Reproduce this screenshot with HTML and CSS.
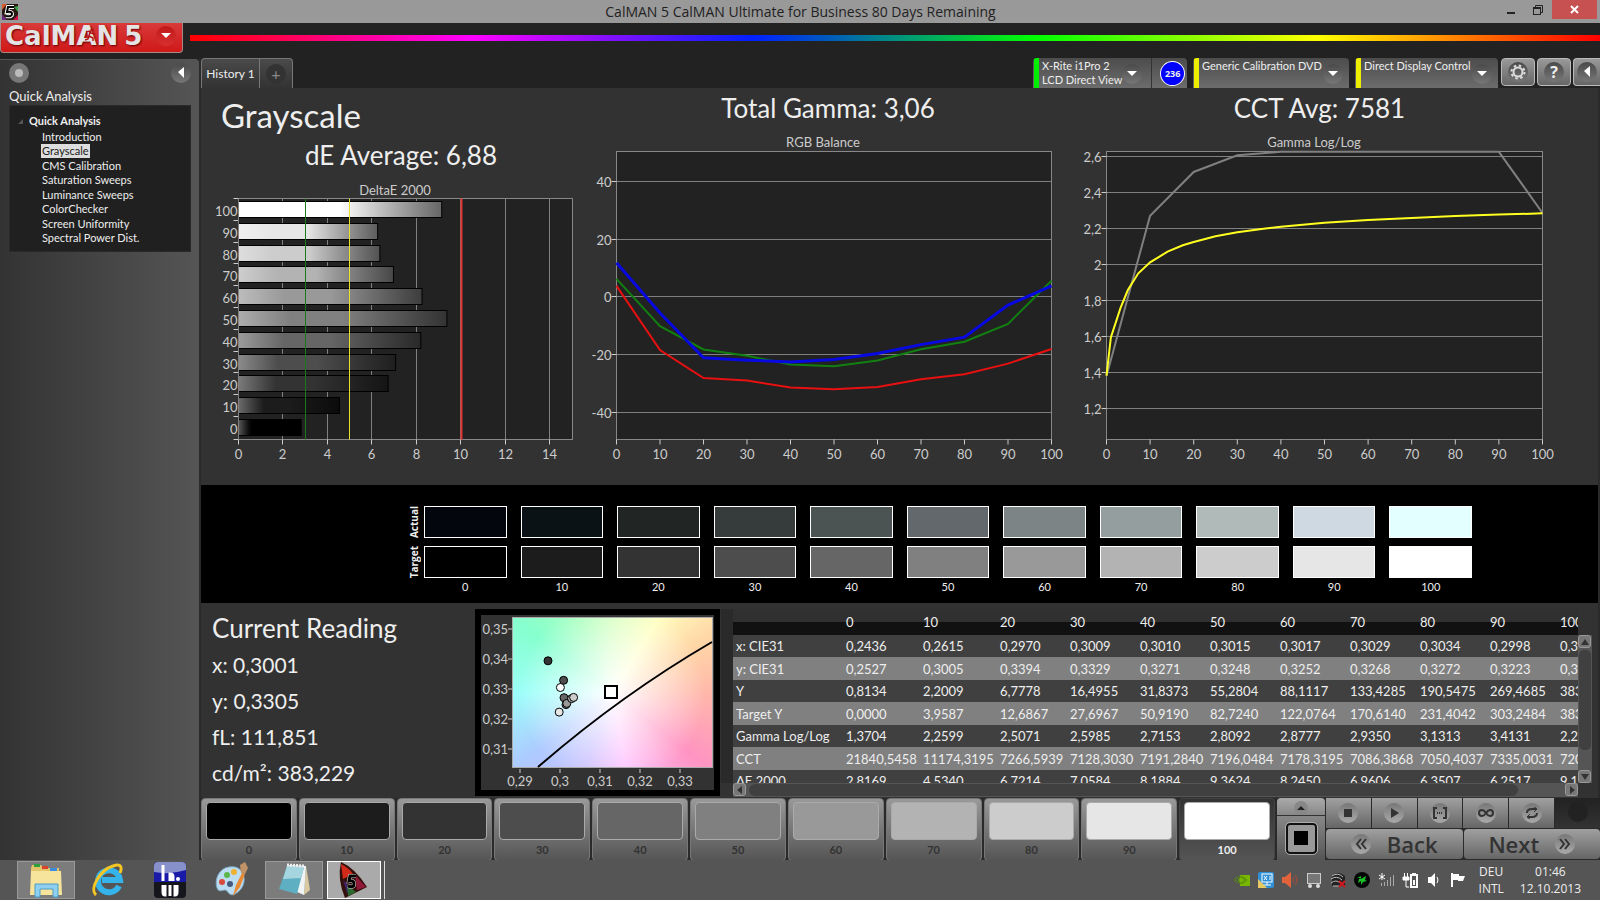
FILE: index.html
```html
<!DOCTYPE html>
<html lang="en">
<head>
  <meta charset="UTF-8">
  <meta name="viewport" content="width=device-width, initial-scale=1.0">
  <title>CalMAN 5</title>
  <link rel="stylesheet" href="styles.css">
</head>
<body>
  <div class="titlebar">
    <svg class="app-icon" viewBox="0 0 16 16">
      <rect width="16" height="16" fill="#2a1a14"/>
      <path d="M0 0h5L0 6z" fill="#d8582a"/><path d="M16 2v6l-4-5z" fill="#3aa84a"/><path d="M0 10l5 6H0z" fill="#6a2a7a"/><path d="M16 11v5h-5z" fill="#d8104a"/>
      <path d="M12 3H6L5 8q5-1 5 2t-6 2" fill="none" stroke="#fff" stroke-width="4"/>
      <path d="M12 3H6L5 8q5-1 5 2t-6 2" fill="none" stroke="#000" stroke-width="2"/>
    </svg>
    <span class="window-title">CalMAN 5 CalMAN Ultimate for Business 80 Days Remaining</span>
    <div class="window-buttons">
      <button class="win-btn" aria-label="Minimize"><svg width="10" height="12"><rect x="1" y="8" width="8" height="2" fill="#222"/></svg></button>
      <button class="win-btn" aria-label="Restore"><svg width="12" height="12" fill="none" stroke="#222"><path d="M3.500 3V1.500h7v7H9"/><rect x="1.500" y="3.500" width="7" height="7"/><path d="M1 4.500h8"/></svg></button>
      <button class="win-btn close" aria-label="Close"><svg width="10" height="10" stroke="#fff" stroke-width="2"><path d="M1 1l7 7M8 1l-7 7"/></svg></button>
    </div>
  </div>

  <header class="brandbar">
    <button class="logo">
      <span class="logo-text">CalMAN</span><span class="logo-text">5</span>
      <svg class="runner" width="12" height="14" viewBox="0 0 12 14" fill="none" stroke="#b01414" stroke-width="1.500"><circle cx="8" cy="2" r="1" fill="#b01414"/><path d="M2 4l4-1 1 2 4 1M6 4L5 8l4 2v3M5 8l-1 3-3 1"/></svg>
      <span class="round red"><svg width="10" height="6"><path d="M0 0h10l-5 5z" fill="#fff"/></svg></span>
    </button>
    <div class="rainbow"></div>
  </header>

  <div class="workspace">
    <aside class="sidebar">
      <div class="sidebar-tools">
        <button class="round ball" aria-label="Record"><span></span></button>
        <button class="round" aria-label="Collapse"><svg width="6" height="12"><path d="M6 0v11L0 5z" fill="#fff"/></svg></button>
      </div>
      <h2 class="sidebar-title">Quick Analysis</h2>
      <nav class="tree">
        <div class="tree-root"><svg width="5" height="5"><path d="M5 0v5H0z" fill="#555"/></svg>Quick Analysis</div>
        <ul>
          <li><a href="#">Introduction</a></li>
          <li><a href="#" class="current">Grayscale</a></li>
          <li><a href="#">CMS Calibration</a></li>
          <li><a href="#">Saturation Sweeps</a></li>
          <li><a href="#">Luminance Sweeps</a></li>
          <li><a href="#">ColorChecker</a></li>
          <li><a href="#">Screen Uniformity</a></li>
          <li><a href="#">Spectral Power Dist.</a></li>
        </ul>
      </nav>
    </aside>

    <main class="main">
      <div class="tabbar">
        <div class="tabs">
          <button class="tab">History 1</button>
          <button class="tab add" aria-label="Add tab"><span class="plus">+</span></button>
        </div>
        <div class="devices">
          <div class="device meter">
            <button class="device-btn"><i class="led green"></i><span>X-Rite i1Pro 2<br>LCD Direct View</span><b class="round"><svg width="10" height="6"><path d="M0 0h10l-5 5z" fill="#fff"/></svg></b></button>
            <span class="count">236</span>
          </div>
          <div class="device source">
            <button class="device-btn"><i class="led yellow"></i><span>Generic Calibration DVD</span><b class="round"><svg width="10" height="6"><path d="M0 0h10l-5 5z" fill="#fff"/></svg></b></button>
          </div>
          <div class="device display">
            <button class="device-btn"><i class="led yellow"></i><span>Direct Display Control</span><b class="round"><svg width="10" height="6"><path d="M0 0h10l-5 5z" fill="#fff"/></svg></b></button>
          </div>
          <button class="tool" aria-label="Settings"><span class="round"><svg width="16" height="16" viewBox="-8 -8 16 16" fill="none" stroke="#ddd"><circle r="4.500" stroke-width="2"/><circle r="6.500" stroke-width="2" stroke-dasharray="2.500 2.600"/></svg></span></button>
          <button class="tool help" aria-label="Help"><span class="round">?</span></button>
          <button class="tool last" aria-label="Collapse"><span class="round"><svg width="6" height="12"><path d="M6 0v11L0 5z" fill="#fff"/></svg></span></button>
        </div>
      </div>

      <section class="charts">
        <div class="chart-col first">
          <h1>Grayscale</h1>
          <h2>dE Average: 6,88</h2>
          <svg id="deltae" viewBox="0 0 384 300"></svg>
        </div>
        <div class="chart-col">
          <h2>Total Gamma: 3,06</h2>
          <svg id="rgb" viewBox="0 0 490 340"></svg>
        </div>
        <div class="chart-col last">
          <h2>CCT Avg: 7581</h2>
          <svg id="gamma" viewBox="0 0 523 340"></svg>
        </div>
      </section>

      <section class="compare">
        <span class="side">Actual</span>
        <div class="patches" id="actual"></div>
        <span class="side">Target</span>
        <div class="patches" id="target"></div>
        <div class="patches names" id="names"></div>
      </section>

      <section class="readings">
        <div class="current-reading">
          <h2>Current Reading</h2>
          <p>x: 0,3001</p>
          <p>y: 0,3305</p>
          <p>fL: 111,851</p>
          <p>cd/m²: 383,229</p>
        </div>
        <div class="cie">
          <svg id="cie" viewBox="0 0 233 175">
            <foreignObject x="31" y="2" width="201" height="151"><div class="cie-bg"></div></foreignObject>
          </svg>
        </div>
        <div class="grid-box">
          <div class="grid-clip"><table id="grid"></table></div>
          <div class="vscroll">
            <button aria-label="Scroll up"><svg width="8" height="8"><path d="M4 1l4 6H0z" fill="#333"/></svg></button>
            <i></i>
            <button aria-label="Scroll down"><svg width="8" height="8"><path d="M4 7l4-6H0z" fill="#333"/></svg></button>
          </div>
          <div class="hscroll">
            <button aria-label="Scroll left"><svg width="8" height="8"><path d="M1 4l5-4v8z" fill="#333"/></svg></button>
            <i></i>
            <button aria-label="Scroll right"><svg width="8" height="8"><path d="M7 4L2 0v8z" fill="#333"/></svg></button>
          </div>
        </div>
      </section>

      <footer class="controls">
        <div class="levels" id="levels"></div>
        <div class="pattern">
          <button class="up" aria-label="Expand"><span class="round small"><svg width="8" height="5"><path d="M4 0l4 4H0z" fill="#222"/></svg></span></button>
          <button class="window" aria-label="Pattern window"><span></span></button>
        </div>
        <div class="transport">
          <div class="transport-row">
            <button aria-label="Stop"><span class="round light"><svg width="8" height="8"><rect width="8" height="8" fill="#333"/></svg></span></button>
            <button aria-label="Play"><span class="round light"><svg width="9" height="10"><path d="M1 0l8 5-8 5z" fill="#333"/></svg></span></button>
            <button aria-label="Read series"><span class="round light"><svg width="14" height="12" fill="none" stroke="#333" stroke-width="2"><path d="M4 1H1v10h3M10 1h3v10h-3"/><path d="M4 6h6" stroke-dasharray="1 1"/></svg></span></button>
            <button aria-label="Continuous"><span class="round light"><svg width="16" height="8" fill="none" stroke="#333" stroke-width="2"><path d="M8 4C6 1 5 1 4 1a3 3 0 0 0 0 6c1 0 2 0 4-3s3-3 4-3a3 3 0 0 1 0 6c-1 0-2 0-4-3z"/></svg></span></button>
            <button aria-label="Refresh"><span class="round light"><svg width="12" height="12" fill="none" stroke="#333" stroke-width="2"><path d="M1 6q0-4 5-4h4M11 6q0 4-5 4H2"/><path d="M8 0l3 2-3 3M4 7l-3 3 3 2" stroke-width="1"/></svg></span></button>
            <button class="off" aria-label="Status"><span class="round dark"></span></button>
          </div>
          <div class="transport-row nav">
            <button><span class="round light"><svg width="12" height="12" fill="none" stroke="#333" stroke-width="2"><path d="M6 1L2 6l4 5M11 1L7 6l4 5"/></svg></span>Back</button>
            <button>Next<span class="round light"><svg width="12" height="12" fill="none" stroke="#333" stroke-width="2"><path d="M1 1l4 5-4 5M6 1l4 5-4 5"/></svg></span></button>
          </div>
        </div>
      </footer>
    </main>
  </div>

  <div class="taskbar">
    <button class="task open" aria-label="Explorer">
      <svg width="34" height="36" viewBox="0 0 34 36"><path d="M3 3h9l2 3h16v26H2V6z" fill="#e3c56b"/><rect x="5" y="2" width="6" height="3" fill="#2ea03c"/><rect x="13" y="4" width="6" height="3" fill="#d8432c"/><rect x="21" y="6" width="7" height="3" fill="#3b8be0"/><path d="M2 9h30l1 24H1z" fill="#f7e49c"/><path d="M6 35V22h23v13h-5v-8H11v8z" fill="#8fcff0" stroke="#4a9cc8"/></svg>
    </button>
    <button class="task" aria-label="Internet Explorer">
      <svg width="32" height="34" viewBox="0 0 32 34"><path d="M27 23a11 11 0 1 1 1-6H10" fill="none" stroke="#35b4ec" stroke-width="6"/><path d="M4 32C-3 26 8 7 21 3c9-3 9 2 7 7" fill="none" stroke="#f3c623" stroke-width="3"/></svg>
    </button>
    <button class="task" aria-label="HCFR">
      <svg width="32" height="36" viewBox="0 0 32 36"><rect width="32" height="36" rx="4" fill="#15151c"/><path d="M4 0h24q4 0 4 4v16H0V4q0-4 4-4z" fill="#1a1aa8"/><path d="M0 10q16 3 32-2V4q0-4-4-4H4Q0 0 0 4z" fill="#8890cc"/><path d="M9 3v16M16 19v-7h1q2 0 2 3v4" fill="none" stroke="#fff" stroke-width="3"/><path d="M9 23v7q0 3 2 3V23M16 23v11M23 23v7q0 3-2 3V23" fill="none" stroke="#fff" stroke-width="3"/><circle cx="24" cy="17" r="2" fill="#fff"/></svg>
    </button>
    <button class="task" aria-label="Paint">
      <svg width="34" height="36" viewBox="0 0 34 36"><path d="M14 5C4 6-1 18 2 26c2 6 8 0 10 3s4 5 8 3c8-4 12-14 7-22-2-4-7-6-13-5z" fill="#bcdcf0" stroke="#7ba7c4"/><circle cx="7" cy="20" r="3" fill="#d84a3a"/><circle cx="12" cy="13" r="3" fill="#5cb84c"/><circle cx="19" cy="10" r="3" fill="#f0b030"/><circle cx="15" cy="22" r="3" fill="#445a80"/><path d="M18 34l3-11 6-12 3 1-5 13z" fill="#e88a34"/><path d="M26 11l-1-8 5-3 3 6-3 6z" fill="#c09468"/></svg>
    </button>
    <button class="task open" aria-label="Notepad">
      <svg width="34" height="36" viewBox="0 0 34 36"><path d="M29 4l4 24-6 5z" fill="#d9c9a0"/><path d="M11 3l18 1-2 29-7-3z" fill="#f0f4f4"/><path d="M10 4l17 1-7 27-18-5z" fill="#5fafc2"/><path d="M10 4l17 1-3 11L6 17z" fill="#a5d5de"/><path d="M10 3l18 1" stroke="#eee" stroke-width="3" stroke-dasharray="2 1"/></svg>
    </button>
    <button class="task open active" aria-label="CalMAN">
      <svg width="34" height="38" viewBox="0 0 34 38"><path d="M4 1q14 6 26 25L8 37Q0 18 4 1z" fill="#34100c"/><path d="M4 3q8 4 12 10l-10 5z" fill="#d22a18"/><path d="M18 14l11 12-9 3z" fill="#901838"/><path d="M6 19l4 13 5-4z" fill="#40206a"/><path d="M10 24l9 7-8 4z" fill="#2a6a30"/><path d="M19 15h-6l-1 5q5-1 5 3t-6 2" fill="none" stroke="#ddd" stroke-width="4"/><path d="M19 15h-6l-1 5q5-1 5 3t-6 2" fill="none" stroke="#000" stroke-width="3"/></svg>
    </button>
    <div class="tray">
      <svg width="16" height="16" viewBox="0 0 16 16"><path d="M6 3h10v11H6z" fill="#76b900"/><path d="M0 8q6-7 13 0-6 7-13 0zM3 8q4-4 8 0-4 4-8 0z" fill="none" stroke="#5a8a10"/><circle cx="7" cy="8" r="2" fill="#76b900"/></svg>
      <svg width="16" height="16" viewBox="0 0 16 16"><rect width="16" height="16" rx="2" fill="#2f8fd6"/><rect x="4" y="2" width="10" height="8" fill="none" stroke="#fff"/><path d="M6 4l3 4M9 4L6 8M12 4v4M9 10v3M5 13h8" stroke="#fff"/><path d="M0 7l9 9H0z" fill="#e8c860"/></svg>
      <svg width="16" height="16" viewBox="0 0 16 16"><path d="M0 5h3l6-5v16l-6-5H0z" fill="#e0633c"/><path d="M11 5q2 3 0 6M13 3q4 5 0 10" fill="none" stroke="#b04a30"/></svg>
      <svg width="16" height="16" viewBox="0 0 16 16"><rect x="1.500" y="1.500" width="13" height="10" fill="#777" stroke="#ccc"/><circle cx="4" cy="14" r="2" fill="#ddd"/><circle cx="12" cy="14" r="2" fill="#ddd"/></svg>
      <svg width="16" height="16" viewBox="0 0 16 16"><path d="M2 4q6-6 13 0v10H2z" fill="#222"/><path d="M2 4q6-4 11 1M1 7q6-4 11 1M1 11q5-4 9 0M3 14h6" fill="none" stroke="#bbb"/><path d="M9 9l6 6M15 9l-6 6" stroke="#d01820" stroke-width="2"/></svg>
      <svg width="16" height="16" viewBox="0 0 16 16"><circle cx="8" cy="8" r="8" fill="#050505"/><path d="M3 6l4-2v3l5-3-1 4 2 1-4 1-2 3v-4l-3 2 1-4 3-1z" fill="#19c028"/></svg>
      <svg width="16" height="16" viewBox="0 0 16 16"><path d="M3.500 14v-3M6.500 14v-4M9.500 14V8M12.500 14V5M15.500 14V3" stroke="#aaa"/><path d="M4 1v7M1 3l6 4M7 3L1 7" stroke="#fff"/></svg>
      <svg width="16" height="16" viewBox="0 0 16 16"><path d="M2.500 1v4M5.500 1v4M1 5h6v3H1zM4 8v7h3" fill="none" stroke="#fff"/><path d="M1 5h6v3H1z" fill="#fff"/><rect x="9" y="3" width="6" height="12" fill="none" stroke="#fff" stroke-width="2"/><path d="M10 1.500h4" stroke="#fff"/><path d="M11 8h2v5h-2z" fill="#fff"/></svg>
      <svg width="16" height="16" viewBox="0 0 16 16"><path d="M2 5h3l4-4v14l-4-4H2z" fill="#fff"/><path d="M11 5q2 3 0 6" fill="none" stroke="#fff"/></svg>
      <svg width="16" height="16" viewBox="0 0 16 16"><path d="M2 1v14" stroke="#fff" stroke-width="2"/><path d="M3 2h6v2h6l-2 5H8V8H3z" fill="#fff"/></svg>
      <div class="lang">DEU<br>INTL</div>
      <div class="clock">01:46<br>12.10.2013</div>
    </div>
  </div>

  <script src="script.js"></script>
</body>
</html>
```

FILE: styles.css
```css
* {
  box-sizing: border-box;
}
body {
  margin: 0;
  min-height: 100vh;
  display: flex;
  flex-direction: column;
  background: #222;
  color: #eee;
  font-family: Lato, "Liberation Sans", sans-serif;
  font-size: 12px;
  overflow-x: hidden;
}
button {
  font: inherit;
  color: inherit;
  border: none;
  background: none;
  padding: 0;
  cursor: pointer;
}
h1, h2, p, ul {
  margin: 0;
  padding: 0;
  font-weight: normal;
}
svg {
  display: block;
  flex: none;
}

/* title bar */
.titlebar {
  display: flex;
  align-items: center;
  height: 23px;
  background: #999;
  color: #222;
}
.app-icon {
  width: 16px;
  height: 16px;
  margin-left: 2px;
}
.window-title {
  flex: 1;
  text-align: center;
  padding-left: 86px;
  font: 14px "Open Sans", sans-serif;
}
.window-buttons {
  display: flex;
  align-self: flex-start;
}
.win-btn {
  width: 27px;
  height: 19px;
  display: flex;
  align-items: center;
  justify-content: center;
}
.win-btn.close {
  width: 45px;
  margin: 0 3px 0 1px;
  background: #c75050;
}

/* logo and spectrum line */
.brandbar {
  display: flex;
  height: 35px;
}
.logo {
  position: relative;
  display: flex;
  align-items: center;
  gap: 6px;
  width: 183px;
  height: 30px;
  padding: 0 6px 4px 4px;
  border: 1px solid #a88;
  border-width: 0 1px 1px;
  border-radius: 0 0 4px 4px;
  background: linear-gradient(#d83a3a, #d01818);
}
.logo-text {
  font: bold 26px/26px "DejaVu Sans", sans-serif;
  color: #e4e4e4;
  text-shadow: 1px 1px 2px #600;
}
.runner {
  position: absolute;
  left: 83px;
  top: 5px;
}
.rainbow {
  flex: 1;
  height: 6px;
  margin: 12px 0 0 7px;
  background: linear-gradient(90deg, #f00, #f0f, #0020ff, #0f0, #ff0, #f00);
}
.round {
  display: inline-flex;
  align-items: center;
  justify-content: center;
  flex: none;
  width: 20px;
  height: 20px;
  border-radius: 50%;
  background: linear-gradient(#4a4a4a, #777);
}
.round.red {
  margin-left: auto;
  background: linear-gradient(#c01818, #d83030);
}
.round.small {
  width: 14px;
  height: 14px;
  background: #888;
}
.round.light {
  background: linear-gradient(#777, #aaa);
}
.round.dark {
  background: #222;
}

/* sidebar */
.workspace {
  flex: 1;
  display: flex;
}
.sidebar {
  flex: none;
  width: 199px;
  margin-top: 1px;
  padding: 3px 8px 0 9px;
  border-top: 1px solid #555;
  border-radius: 0 4px 0 0;
  background: linear-gradient(90deg, #333, #555);
}
.sidebar-tools {
  display: flex;
  justify-content: space-between;
}
.ball {
  background: #777;
}
.ball span {
  width: 8px;
  height: 8px;
  border-radius: 50%;
  background: #bbb;
}
.sidebar-title {
  margin-top: 4px;
  font-size: 13px;
  line-height: 18px;
}
.tree {
  height: 147px;
  padding: 7px 8px;
  background: #202020;
  border: 1px solid #2a2a2a;
  font-size: 11px;
}
.tree-root {
  display: flex;
  align-items: center;
  gap: 6px;
  font-weight: bold;
  line-height: 16px;
}
.tree ul {
  list-style: none;
  padding-left: 23px;
}
.tree li {
  height: 15px;
  line-height: 15px;
}
.tree li:nth-child(even) {
  height: 14px;
  line-height: 14px;
}
.tree a {
  display: inline-block;
  padding: 0 1px;
  color: #eee;
  text-decoration: none;
}
.tree a.current {
  background: #ddd;
  color: #222;
}

/* tabs and devices */
.main {
  flex: 1;
  min-width: 0;
  display: flex;
  flex-direction: column;
  padding-left: 2px;
  background: #2a2a2a;
}
.tabbar {
  display: flex;
  justify-content: space-between;
  height: 30px;
  background: #222;
}
.tabs {
  display: flex;
  border: 1px solid #777;
  border-bottom: none;
  border-radius: 4px 4px 0 0;
  background: linear-gradient(#4a4a4a, #333);
}
.tab {
  width: 57px;
  white-space: nowrap;
}
.tab.add {
  width: 33px;
  border-left: 1px solid #777;
}
.plus {
  display: inline-block;
  width: 20px;
  border-radius: 50%;
  background: #333;
  color: #888;
  font-size: 16px;
  line-height: 20px;
}
.devices {
  display: flex;
  line-height: 14px;
}
.device {
  display: flex;
  margin-right: 6px;
  border-radius: 4px 4px 0 0;
  background: linear-gradient(#4c4c4c, #6c6c6c);
  overflow: hidden;
}
.meter {
  width: 154px;
}
.source {
  width: 156px;
}
.display {
  width: 143px;
  margin-right: 3px;
}
.device-btn {
  flex: 1;
  display: flex;
  align-items: flex-start;
  text-align: left;
  font-size: 11px;
  white-space: nowrap;
}
.device-btn > span {
  padding-top: 1px;
}
.device-btn .round {
  margin: 6px 6px 0 auto;
}
.led {
  align-self: stretch;
  width: 5px;
  margin: 0 3px 0 1px;
}
.led.green {
  background: #0e0;
}
.led.yellow {
  background: #ee0;
}
.meter .device-btn {
  border-right: 1px solid #333;
}
.meter .round {
  margin-right: 9px;
}
.count {
  width: 25px;
  height: 25px;
  margin: 3px 2px 0 8px;
  border: 1px solid #fff;
  border-radius: 50%;
  background: #00f;
  text-align: center;
  font: bold 9px/24px "Open Sans", sans-serif;
}
.tool {
  width: 34px;
  height: 28px;
  margin-right: 2px;
  border: 1px solid #bbb;
  border-radius: 4px;
  background: linear-gradient(#999, #666);
}
.tool.help {
  font: bold 16px "Open Sans", sans-serif;
}
.tool.last {
  width: 27px;
  margin: 0;
  border-right: none;
  border-radius: 4px 0 0 4px;
}

/* charts */
.charts {
  display: grid;
  grid-template-columns: 384fr 490fr 523fr;
  margin-right: 2px;
  padding-bottom: 8px;
  background: #323232;
}
.chart-col {
  padding-top: 5px;
}
.chart-col.first {
  padding-top: 9px;
}
.chart-col svg {
  width: 100%;
}
.chart-col h1 {
  padding-left: 20px;
  font-size: 33px;
  line-height: 36px;
}
.chart-col h2 {
  margin-bottom: 11px;
  padding-right: 4px;
  text-align: center;
  font-size: 26px;
  line-height: 30px;
}
.chart-col.last h2 {
  padding-right: 34px;
}
.chart-col.first h2 {
  margin: 0;
  padding: 0 0 0 16px;
  line-height: 44px;
}
svg text {
  fill: #ccc;
  font-size: 13px;
}
.frame {
  fill: #222;
  stroke: #888;
}
.gridline {
  stroke: #808080;
}
.tick {
  stroke: #ccc;
}
.series {
  fill: none;
}

/* actual and target patches */
.compare {
  display: grid;
  grid-template-columns: 15px 1fr;
  row-gap: 8px;
  margin-right: 2px;
  padding: 21px 126px 8px 208px;
  background: #000;
}
.side {
  writing-mode: vertical-rl;
  transform: rotate(180deg);
  text-align: center;
  font: bold 10px/10px "Open Sans", sans-serif;
}
.patches {
  display: grid;
  grid-template-columns: repeat(11, 1fr);
  column-gap: 14px;
}
.patches i {
  height: 32px;
  border: 1px solid #fff;
}
.patches.names {
  grid-column: 2;
  margin-top: -8px;
  text-align: center;
  font-size: 11px;
  line-height: 17px;
}

/* readings */
.readings {
  display: flex;
  height: 195px;
  margin-right: 2px;
  padding-top: 6px;
  background: #323232;
}
.current-reading {
  width: 274px;
  padding-left: 11px;
}
.current-reading h2 {
  font-size: 26px;
  line-height: 38px;
}
.current-reading p {
  font-size: 21px;
  line-height: 36px;
}
.cie {
  width: 245px;
  height: 187px;
  padding: 5px;
  border: 1px solid #000;
  background: #000;
}
.cie svg {
  width: 233px;
  height: 175px;
  background: #323232;
}
.cie-bg {
  height: 151px;
  border: 1px solid #aaa;
  background:
    radial-gradient(circle at 50% 50%, #fff, rgba(255,255,255,.6) 35%, rgba(255,255,255,.1) 75%),
    conic-gradient(from 0deg at 50% 50%, #d0ffb8, #ffffb8 32deg, #ffd29c 60deg, #ffb0a0 90deg, #ff88bb 128deg, #ffb8ff 170deg, #c4b8ff 200deg, #a4c4ff 232deg, #90fff8 270deg, #78ffc8 307deg, #a0ffb8 335deg, #d0ffb8);
}
.grid-box {
  flex: 1;
  min-width: 0;
  display: grid;
  grid-template-columns: 1fr 14px;
  grid-template-rows: 174px 14px;
  margin: 0 6px 0 1px;
}
.grid-clip {
  min-width: 0;
  overflow: hidden;
  border-left: 12px solid #2a2a2a;
  background: #333;
}
table {
  table-layout: fixed;
  width: 897px;
  border-collapse: collapse;
  font-size: 13px;
}
th, td {
  padding: 0;
  text-align: left;
  font-weight: normal;
  white-space: nowrap;
}
thead tr {
  height: 26px;
  background: linear-gradient(#303030 50%, #111 50%);
}
tbody tr {
  height: 22px;
  background: #404040;
}
tbody tr:nth-child(even) {
  height: 23px;
  background: #808080;
}
table th:first-child {
  padding-left: 3px;
}
.vscroll, .hscroll {
  display: flex;
  background: #555;
}
.vscroll {
  flex-direction: column;
  margin-top: 26px;
}
.hscroll {
  margin-left: 12px;
}
.vscroll button, .hscroll button {
  display: flex;
  align-items: center;
  justify-content: center;
  width: 13px;
  height: 13px;
  border: 1px solid #999;
  border-radius: 3px;
  background: #777;
}
.vscroll i {
  height: 100px;
  margin: 2px 1px auto;
  border-radius: 5px;
  background: #404040;
}
.hscroll i {
  width: 91%;
  margin: 1px auto 1px 3px;
  border-radius: 6px;
  background: #404040;
}

/* level buttons and transport */
.controls {
  display: flex;
  height: 62px;
}
.levels {
  flex: 1;
  display: grid;
  grid-template-columns: repeat(11, 1fr);
  gap: 2px;
}
.level {
  display: flex;
  flex-direction: column;
  padding: 3px 4px 0;
  border: 1px solid #777;
  border-radius: 4px;
  background: linear-gradient(#999, #555);
  color: #333;
  font-size: 11px;
  font-weight: bold;
  line-height: 20px;
}
.level i {
  display: block;
  width: 100%;
  height: 38px;
  border: 1px solid #aaa;
  border-radius: 4px;
}
.level.selected {
  border-color: #444;
  background: linear-gradient(#333, #555);
  color: #eee;
}
.pattern {
  width: 48px;
  margin: 0 1px 0 2px;
  display: flex;
  flex-direction: column;
}
.up {
  height: 18px;
  border-radius: 4px 4px 0 0;
  border-bottom: 1px solid #333;
  background: linear-gradient(#aaa, #888);
}
.window {
  flex: 1;
  display: flex;
  align-items: center;
  justify-content: center;
  background: linear-gradient(#888, #555);
}
.window span {
  width: 31px;
  height: 31px;
  border: 2px solid #111;
  border-radius: 4px;
  outline: 1px solid #aaa;
  background: linear-gradient(#000, #000) center / 14px 14px no-repeat, #999;
}
.transport {
  width: 274px;
}
.transport-row {
  display: flex;
  height: 30px;
  gap: 1px;
  margin-bottom: 1px;
}
.transport button {
  flex: 1;
  background: linear-gradient(#a0a0a0, #666);
}
.transport button.off {
  background: linear-gradient(#222, #333);
}
.transport .nav button {
  display: flex;
  align-items: center;
  justify-content: center;
  gap: 16px;
  border-radius: 4px;
  color: #333;
  font: 600 22px "Open Sans", sans-serif;
}

/* taskbar */
.taskbar {
  display: flex;
  height: 40px;
  padding: 1px 19px 1px 17px;
  background: #555;
}
.task {
  display: flex;
  align-items: center;
  justify-content: center;
  width: 58px;
  margin-right: 4px;
}
.task.open {
  border: 1px solid #999;
  background: #7c7c7c;
}
.task.active {
  width: 54px;
  border-color: #fff;
  background: #aaa;
  box-shadow: 3px 0 0 #555, 4px 0 0 #ddd;
}
.tray {
  display: flex;
  align-items: center;
  gap: 8px;
  margin-left: auto;
  text-align: center;
  font: 12px/17px "Open Sans", sans-serif;
}
.lang {
  margin-left: 5px;
}
.clock {
  margin-left: 8px;
}
```

FILE: script.js
```js
const NS = 'http://www.w3.org/2000/svg';
const steps = [0, 10, 20, 30, 40, 50, 60, 70, 80, 90, 100];
const grays = ['#000000', '#1c1c1c', '#333333', '#4d4d4d', '#666666', '#808080', '#999999', '#b3b3b3', '#cccccc', '#e6e6e6', '#ffffff'];
const actual = ['#03060d', '#0a1215', '#212624', '#363c3c', '#4c5453', '#62686b', '#7d8486', '#959e9f', '#b0bab8', '#cfd9e2', '#e3ffff'];

const rows = [
  ['x: CIE31', '0,2436', '0,2615', '0,2970', '0,3009', '0,3010', '0,3015', '0,3017', '0,3029', '0,3034', '0,2998', '0,3001'],
  ['y: CIE31', '0,2527', '0,3005', '0,3394', '0,3329', '0,3271', '0,3248', '0,3252', '0,3268', '0,3272', '0,3223', '0,3305'],
  ['Y', '0,8134', '2,2009', '6,7778', '16,4955', '31,8373', '55,2804', '88,1117', '133,4285', '190,5475', '269,4685', '383,2290'],
  ['Target Y', '0,0000', '3,9587', '12,6867', '27,6967', '50,9190', '82,7240', '122,0764', '170,6140', '231,4042', '303,2484', '383,2290'],
  ['Gamma Log/Log', '1,3704', '2,2599', '2,5071', '2,5985', '2,7153', '2,8092', '2,8777', '2,9350', '3,1313', '3,4131', '2,2850'],
  ['CCT', '21840,5458', '11174,3195', '7266,5939', '7128,3030', '7191,2840', '7196,0484', '7178,3195', '7086,3868', '7050,4037', '7335,0031', '7200,0000'],
  ['ΔE 2000', '2,8169', '4,5340', '6,7214', '7,0584', '8,1884', '9,3624', '8,2450', '6,9606', '6,3507', '6,2517', '9,1300']
];

function add(parent, tag, attrs, text) {
  const node = document.createElementNS(NS, tag);
  for (const key in attrs) node.setAttribute(key, attrs[key]);
  if (text !== undefined) node.textContent = text;
  parent.appendChild(node);
  return node;
}

function line(svg, cls, x1, y1, x2, y2) {
  return add(svg, 'line', { class: cls, x1, y1, x2, y2 });
}

function label(svg, text, x, y, anchor) {
  add(svg, 'text', { x, y, 'text-anchor': anchor || 'middle' }, text);
}

function num(s) {
  return parseFloat(s.replace(',', '.'));
}

// DeltaE bars
function drawDeltaE() {
  const svg = document.getElementById('deltae');
  const x0 = 37.5, top = 21.5, bottom = 262.5, unit = 22.26;
  label(svg, 'DeltaE 2000', 194, 18);
  add(svg, 'rect', { class: 'frame', x: x0, y: top, width: 334, height: bottom - top });
  for (let v = 0; v < 15; v += 2) {
    const x = Math.floor(x0 + v * unit - 0.4) + 0.5;
    if (v) line(svg, 'gridline', x, top, x, bottom);
    line(svg, 'tick', x, bottom, x, bottom + 5);
    label(svg, v, x, bottom + 19);
  }
  const defs = add(svg, 'defs', {});
  steps.slice().reverse().forEach((step, i) => {
    const n = step / 10;
    const y = Math.round(24 + i * 21.8);
    const g = add(defs, 'linearGradient', { id: 'bar' + step });
    add(g, 'stop', { offset: 0, style: `stop-color:color-mix(in srgb, ${grays[n]} 65%, white)` });
    add(g, 'stop', { offset: 0.25, 'stop-color': grays[n] });
    add(g, 'stop', { offset: 0.5, 'stop-color': grays[n] });
    add(g, 'stop', { offset: 1, style: `stop-color:color-mix(in srgb, ${grays[n]} 40%, black)` });
    add(svg, 'rect', { x: x0, y: y + 0.5, width: num(rows[6][n + 1]) * unit, height: 16, fill: `url(#bar${step})`, stroke: '#000' });
    line(svg, 'tick', x0 - 5, y - 2.5, x0, y - 2.5);
    label(svg, step, x0 - 1, y + 15, 'end');
  });
  line(svg, 'tick', x0 - 5, bottom, x0, bottom);
  line(svg, 'gridline', x0, top, x0, bottom);
  [[3, '#1a7a1a'], [5, '#e8e030'], [10, '#e03030']].forEach(([v, color]) => {
    const x = Math.floor(x0 + v * unit) + 0.5;
    line(svg, '', x, top, x, bottom).setAttribute('style', `stroke:${color};stroke-width:${v > 5 ? 2 : 1}`);
  });
}

function drawLines(id, title, titleX, plot, toY, marks, series) {
  const svg = document.getElementById(id);
  const px = v => plot.x + v * plot.w / 100;
  label(svg, title, titleX, 13);
  add(svg, 'rect', { class: 'frame', x: plot.x, y: plot.y, width: plot.w, height: plot.h });
  marks.forEach(v => {
    const y = Math.floor(toY(v)) + 0.5;
    line(svg, 'gridline', plot.x, y, plot.x + plot.w, y);
    line(svg, 'tick', plot.x - 5, y, plot.x, y);
    label(svg, String(v).replace('.', ','), plot.x - 5, y + 5, 'end');
  });
  steps.forEach(v => {
    line(svg, 'tick', px(v), plot.y + plot.h, px(v), plot.y + plot.h + 5);
    label(svg, v, px(v), plot.y + plot.h + 19);
  });
  series.forEach(s => {
    const points = s.points.map(p => px(p[0]) + ',' + toY(p[1])).join(' ');
    add(svg, 'polyline', { class: 'series', points, stroke: s.color, 'stroke-width': s.width || 2 });
  });
}

const byStep = values => values.map((v, i) => [i * 10, v]);

drawDeltaE();

drawLines('rgb', 'RGB Balance', 238, { x: 31.5, y: 17.5, w: 435, h: 288 }, v => 162.8 - v * 2.88, [40, 20, 0, -20, -40], [
  { color: '#118011', points: byStep([6.2, -10.2, -18.3, -20.5, -23.5, -24.1, -22.1, -18.2, -15.6, -9.4, 5.6]) },
  { color: '#0808e0', width: 3, points: byStep([11.8, -5.6, -21.2, -22, -22.6, -21.8, -19.7, -16.6, -14, -2.9, 3.8]) },
  { color: '#e81010', points: byStep([3.8, -18.5, -28.2, -29.1, -31.5, -32.1, -31.3, -28.6, -26.9, -23.2, -18.1]) }
]);

drawLines('gamma', 'Gamma Log/Log', 239, { x: 31.5, y: 17.5, w: 436, h: 288 }, v => 274.3 - (v - 1.2) * 180, [2.6, 2.4, 2.2, 2, 1.8, 1.6, 1.4, 1.2], [
  { color: '#808080', points: byStep([1.38, 2.27, 2.513, 2.606, 2.625, 2.625, 2.625, 2.625, 2.625, 2.625, 2.285]) },
  { color: '#ffff20', points: [[0, 1.381], [1, 1.594], [3.2, 1.756], [4.9, 1.857], [7.3, 1.95], [10, 2.011], [14, 2.07], [17.5, 2.106], [20, 2.124], [25, 2.156], [30, 2.178], [36, 2.198], [40, 2.209], [50, 2.231], [60, 2.246], [70, 2.257], [80, 2.269], [90, 2.276], [100, 2.283]] }
]);

// CIE chart around the white point
function drawCie() {
  const svg = document.getElementById('cie');
  const px = v => 39 + (v - 0.29) * 4000;
  const py = v => 14 + (0.35 - v) * 3000;
  [0.29, 0.3, 0.31, 0.32, 0.33].forEach(v => {
    line(svg, 'tick', px(v), 154, px(v), 158);
    label(svg, String(v).replace('.', ','), px(v), 171);
  });
  [0.35, 0.34, 0.33, 0.32, 0.31].forEach(v => {
    line(svg, 'tick', 27, py(v), 31, py(v));
    label(svg, String(v).replace('.', ','), 27, py(v) + 5, 'end');
  });
  add(svg, 'path', { d: 'M57 152Q140 80 231 27', fill: 'none', stroke: '#000', 'stroke-width': 2 });
  for (let i = 2; i < 11; i++) {
    add(svg, 'circle', { cx: px(num(rows[0][i + 1])), cy: py(num(rows[1][i + 1])), r: 4, fill: grays[i], stroke: '#000' });
  }
  add(svg, 'rect', { x: 124, y: 71, width: 12, height: 12, fill: '#fff', stroke: '#000', 'stroke-width': 2 });
}
drawCie();

// patches and level buttons
steps.forEach((step, i) => {
  document.getElementById('actual').insertAdjacentHTML('beforeend', `<i style="background:${actual[i]}"></i>`);
  document.getElementById('target').insertAdjacentHTML('beforeend', `<i style="background:${grays[i]}"></i>`);
  document.getElementById('names').insertAdjacentHTML('beforeend', `<span>${step}</span>`);
  document.getElementById('levels').insertAdjacentHTML('beforeend',
    `<button class="level${step === 100 ? ' selected' : ''}"><i style="background:${grays[i]}"></i>${step}</button>`);
});

// data grid
const widths = [113, 77, 77, 70, 70, 70, 70, 70, 70, 70, 70, 70];
document.getElementById('grid').innerHTML =
  '<colgroup>' + widths.map(w => `<col style="width:${w}px">`).join('') + '</colgroup>' +
  '<thead><tr><th></th>' + steps.map(s => `<th>${s}</th>`).join('') + '</tr></thead><tbody>' +
  rows.map(r => '<tr><th>' + r[0] + '</th>' + r.slice(1).map(v => `<td>${v}</td>`).join('') + '</tr>').join('') + '</tbody>';
```
